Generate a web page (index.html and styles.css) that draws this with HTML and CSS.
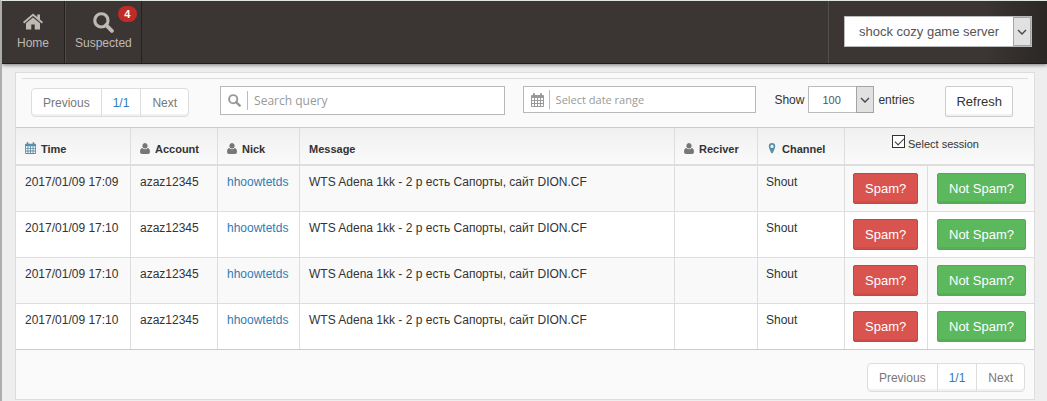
FILE: index.html
```
<!DOCTYPE html>
<html lang="en">
<head>
    <meta charset="UTF-8">
    <meta name="viewport" content="width=device-width, initial-scale=1.0">
    <title>Suspected</title>
    <link rel="stylesheet" href="styles.css">
</head>
<body>
    <svg class="sprite" aria-hidden="true">
        <symbol id="search" viewBox="0 0 20 20">
            <circle cx="8" cy="8" r="6.3" fill="none" stroke="currentColor" stroke-width="3"/>
            <path d="M12.5 12.5L18 18" stroke="currentColor" stroke-width="3.6" stroke-linecap="round"/>
        </symbol>
        <symbol id="home" viewBox="0 0 20 16">
            <path fill="currentColor" d="M10 0L0 8.600l1.200 1.300L10 2.500l8.800 7.400L20 8.600l-3-2.600V1h-2.800v2.600zM10 4L3 9.800V16h5.300v-5h3.400v5H17V9.800z"/>
        </symbol>
        <symbol id="calendar" viewBox="0 0 13 14">
            <path fill="currentColor" fill-rule="evenodd" d="M0 3q0-1 1-1h1V1q0-1 1-1t1 1v1h5V1q0-1 1-1t1 1v1h1q1 0 1 1v10q0 1-1 1H1q-1 0-1-1zM1 5v2h2V5zm3 0v2h2V5zm3 0v2h2V5zm3 0v2h2V5zM1 8v2h2V8zm3 0v2h2V8zm3 0v2h2V8zm3 0v2h2V8zM1 11v2h2v-2zm3 0v2h2v-2zm3 0v2h2v-2zm3 0v2h2v-2z"/>
        </symbol>
        <symbol id="user" viewBox="0 0 10 11">
            <path fill="currentColor" d="M5 0a2.700 2.900 0 0 1 2 4.800Q6.500 5.600 5 5.600T3 4.800A2.700 2.900 0 0 1 5 0zM2.300 5Q3.300 6.300 5 6.300T7.700 5Q10 5.400 10 9q0 2-2 2H2q-2 0-2-2 0-3.600 2.300-4z"/>
        </symbol>
        <symbol id="marker" viewBox="0 0 8 12">
            <path fill="currentColor" fill-rule="evenodd" d="M4 0a3.500 3.500 0 0 1 3.500 3.700Q7.500 5 5 10.500q-1 1.600-2 0Q.5 5 .5 3.700A3.500 3.500 0 0 1 4 0zm0 2a1.700 1.700 0 1 0 0 3.400A1.700 1.700 0 0 0 4 2z"/>
        </symbol>
        <symbol id="arrow" viewBox="0 0 10 6">
            <path d="M1 1l4 4 4-4" fill="none" stroke="#444" stroke-width="1.300"/>
        </symbol>
    </svg>

    <header class="navbar">
        <nav class="menu">
            <a class="menu-item home" href="#">
                <svg><use href="#home"/></svg>
                Home
            </a>
            <a class="menu-item" href="#">
                <svg><use href="#search"/></svg>
                Suspected
                <span class="badge">4</span>
            </a>
        </nav>
        <div class="server">
            <div class="select">
                <select aria-label="Server">
                    <option>shock cozy game server</option>
                </select>
                <span class="select-arrow"><svg><use href="#arrow"/></svg></span>
            </div>
        </div>
    </header>

    <main class="panel">
        <div class="toolbar">
            <div class="pager">
                <a href="#">Previous</a>
                <a class="current" href="#">1/1</a>
                <a href="#">Next</a>
            </div>
            <label class="field field-search">
                <svg><use href="#search"/></svg>
                <input type="text" placeholder="Search query" aria-label="Search query">
            </label>
            <label class="field field-date">
                <svg><use href="#calendar"/></svg>
                <input type="text" placeholder="Select date range" aria-label="Select date range">
            </label>
            <div class="entries">
                <label for="entries">Show</label>
                <div class="select">
                    <select id="entries">
                        <option>100</option>
                    </select>
                    <span class="select-arrow"><svg><use href="#arrow"/></svg></span>
                </div>
                <span>entries</span>
            </div>
            <button type="button" class="btn">Refresh</button>
        </div>

        <table class="messages">
            <colgroup>
                <col class="col-time">
                <col class="col-account">
                <col class="col-nick">
                <col>
                <col class="col-reciver">
                <col class="col-channel">
                <col class="col-spam">
                <col class="col-notspam">
            </colgroup>
            <thead>
                <tr>
                    <th><svg class="blue calendar"><use href="#calendar"/></svg>Time</th>
                    <th><svg><use href="#user"/></svg>Account</th>
                    <th><svg><use href="#user"/></svg>Nick</th>
                    <th>Message</th>
                    <th><svg><use href="#user"/></svg>Reciver</th>
                    <th><svg class="blue"><use href="#marker"/></svg>Channel</th>
                    <th class="session" colspan="2">
                        <label><input type="checkbox" checked>Select session</label>
                    </th>
                </tr>
            </thead>
            <tbody>
                <tr>
                    <td>2017/01/09 17:09</td>
                    <td>azaz12345</td>
                    <td><a href="#">hhoowtetds</a></td>
                    <td>WTS Adena 1kk - 2 р есть Сапорты, сайт DION.CF</td>
                    <td></td>
                    <td>Shout</td>
                    <td><button type="button" class="btn btn-danger">Spam?</button></td>
                    <td><button type="button" class="btn btn-success">Not Spam?</button></td>
                </tr>
                <tr>
                    <td>2017/01/09 17:10</td>
                    <td>azaz12345</td>
                    <td><a href="#">hhoowtetds</a></td>
                    <td>WTS Adena 1kk - 2 р есть Сапорты, сайт DION.CF</td>
                    <td></td>
                    <td>Shout</td>
                    <td><button type="button" class="btn btn-danger">Spam?</button></td>
                    <td><button type="button" class="btn btn-success">Not Spam?</button></td>
                </tr>
                <tr>
                    <td>2017/01/09 17:10</td>
                    <td>azaz12345</td>
                    <td><a href="#">hhoowtetds</a></td>
                    <td>WTS Adena 1kk - 2 р есть Сапорты, сайт DION.CF</td>
                    <td></td>
                    <td>Shout</td>
                    <td><button type="button" class="btn btn-danger">Spam?</button></td>
                    <td><button type="button" class="btn btn-success">Not Spam?</button></td>
                </tr>
                <tr>
                    <td>2017/01/09 17:10</td>
                    <td>azaz12345</td>
                    <td><a href="#">hhoowtetds</a></td>
                    <td>WTS Adena 1kk - 2 р есть Сапорты, сайт DION.CF</td>
                    <td></td>
                    <td>Shout</td>
                    <td><button type="button" class="btn btn-danger">Spam?</button></td>
                    <td><button type="button" class="btn btn-success">Not Spam?</button></td>
                </tr>
            </tbody>
        </table>

        <div class="panel-footer">
            <div class="pager">
                <a href="#">Previous</a>
                <a class="current" href="#">1/1</a>
                <a href="#">Next</a>
            </div>
        </div>
    </main>
</body>
</html>
```
FILE: styles.css
```
* {
    box-sizing: border-box;
}
body {
    min-height: 100vh;
    margin: 0;
    border-top: 1px solid #dfe6e0;
    border-left: 2px solid #adadad;
    background: #eee;
    color: #333;
    font-family: "Liberation Sans", Arial, sans-serif;
    font-size: 12px;
    line-height: 18px;
}
a {
    color: #337ab7;
    text-decoration: none;
}
input, select, button {
    font-family: inherit;
    color: inherit;
}
.sprite {
    display: none;
}

/* top bar */
.navbar {
    display: flex;
    justify-content: space-between;
    height: 63px;
    border-bottom: 1px solid #1f1c1a;
    background: linear-gradient(to right, #3b3633 94%, #2b2724);
    box-shadow: 0 1px 4px rgba(0, 0, 0, 0.5);
}
.menu {
    display: flex;
}
.menu-item {
    position: relative;
    display: flex;
    flex-direction: column;
    align-items: center;
    justify-content: space-between;
    padding: 11px 9px 11px 9px;
    border-right: 1px solid #24211f;
    border-left: 1px solid #4d4a48;
    color: #bfb9b4;
}
.menu-item svg {
    width: 21px;
    height: 21px;
}
.menu-item.home {
    padding: 12px 15px 11px 15px;
    border-left: 0;
}
.menu-item.home svg {
    width: 20px;
    height: 17px;
}
.badge {
    position: absolute;
    top: 5px;
    right: 4px;
    width: 19px;
    border-radius: 8px;
    background: #c02b26;
    color: #fff;
    font-size: 11px;
    font-weight: bold;
    line-height: 16px;
    text-align: center;
}
.server {
    padding: 15px 15px 0 15px;
    border-left: 1px solid #52504f;
}

/* drop-downs */
.select {
    position: relative;
}
.select select {
    display: block;
    width: 66px;
    height: 27px;
    padding: 0 13px;
    border: 1px solid #bbb;
    border-radius: 0;
    background: #fff;
    color: #555;
    font-size: 11px;
    appearance: none;
}
.server .select select {
    width: 188px;
    height: 31px;
    padding: 0 14px;
    font-size: 13px;
}
.select-arrow {
    position: absolute;
    top: 0;
    right: 0;
    bottom: 0;
    display: flex;
    align-items: center;
    justify-content: center;
    width: 18px;
    border: 1px solid #a5a5a5;
    background: #e1e1e1;
    pointer-events: none;
}
.server .select-arrow {
    top: 1px;
    right: 1px;
    bottom: 1px;
}
.select-arrow svg {
    width: 10px;
    height: 6px;
}

/* panel */
.panel {
    margin: 8px 12px 0 13px;
    border: 1px solid #ddd;
    background: #fafafa;
}
.toolbar {
    display: flex;
    align-items: flex-start;
    height: 49px;
    margin: 5px 6px 0;
    padding: 7px 15px 0 9px;
    border-top: 1px solid #ddd;
}
.pager {
    display: flex;
    border: 1px solid #ddd;
    border-radius: 4px;
    background: #fff;
    box-shadow: inset 0 -2px 0 #f1f1f1;
}
.pager a {
    padding: 5px 11px 4px;
    color: #777;
}
.pager a + a {
    border-left: 1px solid #ddd;
}
.pager .current {
    color: #337ab7;
}
.toolbar .pager {
    margin: 2px 31px 0 0;
}
.field {
    display: flex;
    align-items: center;
    border: 1px solid #b8b8b8;
    background: #fff;
    color: #999;
}
.field input {
    flex: 1;
    min-width: 0;
    height: 19px;
    padding: 0 6px;
    border: 0;
    border-left: 1px solid #bbb;
    outline: 0;
    background: none;
    font-family: "Open Sans", sans-serif;
}
.field input::placeholder {
    color: #999;
}
.field-search {
    flex: 284 1 0;
    height: 29px;
}
.field-search svg {
    width: 13px;
    height: 13px;
    margin: 0 6px 0 7px;
}
.field-search input {
    font-size: 12px;
}
.field-date {
    flex: 233 1 0;
    height: 27px;
    margin: 0 18px;
}
.field-date svg {
    width: 13px;
    height: 14px;
    margin: 0 5px 0 7px;
}
.field-date input {
    font-size: 11px;
}
.entries {
    display: flex;
    align-items: center;
    gap: 4px;
    margin-right: 31px;
}

/* buttons */
.btn {
    display: block;
    height: 31px;
    padding: 0 11px;
    border: 1px solid #ccc;
    border-radius: 2px;
    background: #fff;
    box-shadow: inset 0 -2px 0 rgba(0, 0, 0, 0.05);
    font-size: 13px;
    white-space: nowrap;
    cursor: pointer;
}
.toolbar .btn {
    padding: 0 10px;
}
.btn-danger {
    border-color: #d43f3a;
    background: #d9534f;
    color: #fff;
}
.btn-success {
    border-color: #4cae4c;
    background: #5cb85c;
    color: #fff;
}

/* table */
.messages {
    width: 100%;
    border-top: 1px solid #ccc;
    border-bottom: 1px solid #ccc;
    border-spacing: 0;
    table-layout: fixed;
}
.col-time {
    width: 115px;
}
.col-account, .col-channel {
    width: 87px;
}
.col-nick {
    width: 82px;
}
.col-reciver, .col-spam {
    width: 83px;
}
.col-notspam {
    width: 106px;
}
.messages th, .messages td {
    padding: 7px 8px 7px 9px;
    border-right: 1px solid #ddd;
    text-align: left;
    vertical-align: top;
    white-space: nowrap;
}
.messages th:last-child, .messages td:last-child {
    border-right: 0;
}
.messages th {
    height: 38px;
    padding: 12px 8px 6px 9px;
    border-bottom: 2px solid #ddd;
    background: linear-gradient(#f0f0f0, #fafafa);
    font-size: 11px;
}
.messages th svg {
    width: 10px;
    height: 11px;
    margin-right: 5px;
    color: #777;
    vertical-align: -1px;
}
.messages th .calendar {
    width: 11px;
    height: 12px;
}
.messages th .blue {
    color: #5b8fa8;
}
.messages td {
    background: #fff;
}
.messages td:nth-child(7), .messages td:nth-child(6) {
    padding-left: 8px;
}
.messages tbody tr:nth-child(odd) td {
    background: #f9f9f9;
}
.messages tbody tr + tr td {
    border-top: 1px solid #ddd;
}
.messages .session {
    padding: 7px 16px 7px 8px;
    font-weight: normal;
    text-align: center;
}
.session label {
    display: inline-flex;
    gap: 3px;
}
.session input {
    position: relative;
    width: 13px;
    height: 13px;
    margin: 0;
    border: 1px solid #333;
    background: #fff;
    appearance: none;
}
.session input:checked::after {
    content: "";
    position: absolute;
    top: 2px;
    left: 2px;
    width: 8px;
    height: 4px;
    border: solid #333;
    border-width: 0 0 1px 1px;
    transform: rotate(-45deg);
}
.panel-footer {
    display: flex;
    justify-content: flex-end;
    padding: 13px 9px 7px;
}
```
